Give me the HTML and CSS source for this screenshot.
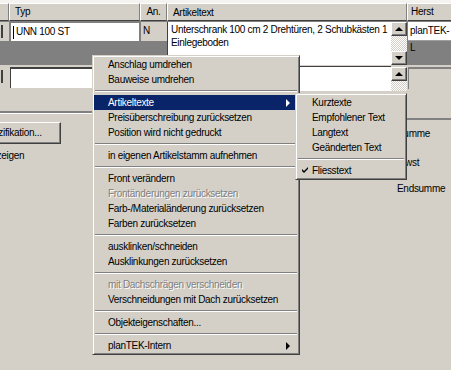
FILE: index.html
```html
<!DOCTYPE html>
<html>
    <head>
        <meta http-equiv="Content-Type" content="text/html; charset=utf-8" />
        <title>Positionen</title>
        <link rel="stylesheet" href="styles.css">
    </head>
    <body>
        <div class="strip"></div>
        <div class="grid-head">
            <div class="hcell c0"></div>
            <div class="hcell c-typ">Typ</div>
            <div class="hcell c-an">An.</div>
            <div class="hcell c-text">Artikeltext</div>
            <div class="hcell c-herst">Herst</div>
        </div>
        <div class="grid-row first">
            <div class="col c0"><div class="stub"><span></span></div></div>
            <div class="col c-typ"><div class="edit"><span class="caret"></span>UNN 100 ST</div></div>
            <div class="col c-an"><div class="flag">N</div></div>
            <div class="col c-text">
                <div class="memo">Unterschrank 100 cm 2 Drehtüren, 2 Schubkästen 1<br>Einlegeboden</div>
                <div class="vscroll">
                    <div class="sbtn up"></div>
                    <div class="track"></div>
                    <div class="sbtn down"></div>
                </div>
            </div>
            <div class="col c-herst">
                <div class="herst">planTEK-</div>
                <div class="herst dark">L</div>
            </div>
        </div>
        <div class="grid-row second">
            <div class="col c0"><div class="stub"><span></span></div></div>
            <div class="col c-typ"><div class="edit"></div></div>
            <div class="col c-an"></div>
            <div class="col c-text">
                <div class="memo"></div>
                <div class="vscroll">
                    <div class="sbtn up"></div>
                    <div class="track"></div>
                </div>
            </div>
            <div class="col c-herst"><div class="herst sunken"></div></div>
        </div>
        <div class="lower">
            <div class="panel-left">
                <div class="etched"></div>
                <div class="btn">Spezifikation...</div>
                <div class="check-label">anzeigen</div>
            </div>
            <div class="panel-right">
                <div class="sum-label">Summe</div>
                <div class="sum-label">Mwst</div>
                <div class="sum-label">Endsumme</div>
            </div>
        </div>

        <div class="menu main-menu">
            <div class="item">Anschlag umdrehen</div>
            <div class="item">Bauweise umdrehen</div>
            <div class="sep"></div>
            <div class="item active sub">Artikeltexte<i class="arrow"></i></div>
            <div class="item">Preisüberschreibung zurücksetzen</div>
            <div class="item">Position wird nicht gedruckt</div>
            <div class="sep"></div>
            <div class="item">in eigenen Artikelstamm aufnehmen</div>
            <div class="sep"></div>
            <div class="item">Front verändern</div>
            <div class="item disabled">Frontänderungen zurücksetzen</div>
            <div class="item">Farb-/Materialänderung zurücksetzen</div>
            <div class="item">Farben zurücksetzen</div>
            <div class="sep"></div>
            <div class="item">ausklinken/schneiden</div>
            <div class="item">Ausklinkungen zurücksetzen</div>
            <div class="sep"></div>
            <div class="item disabled">mit Dachschrägen verschneiden</div>
            <div class="item">Verschneidungen mit Dach zurücksetzen</div>
            <div class="sep"></div>
            <div class="item">Objekteigenschaften...</div>
            <div class="sep"></div>
            <div class="item sub">planTEK-Intern<i class="arrow"></i></div>
        </div>

        <div class="menu sub-menu">
            <div class="item">Kurztexte</div>
            <div class="item">Empfohlener Text</div>
            <div class="item">Langtext</div>
            <div class="item">Geänderten Text</div>
            <div class="sep"></div>
            <div class="item checked">
                <svg class="tick" width="7" height="7" viewBox="0 0 7 7"><path d="M0 2 L2 4 L6 0 L6 2 L2 6 L0 4 Z" fill="#000"/></svg>Fliesstext
            </div>
        </div>
    </body>
</html>
```

FILE: styles.css
```css
body {
    margin:         0;
    width:          451px;
    height:         370px;
    overflow:       hidden;
    position:       relative;
    background:     #d4d0c8;
    font-family:    "Liberation Sans", Arial, sans-serif;
    font-size:      10px;
    letter-spacing: -0.3px;
    color:          #000;
}

/* grid */
.strip {
    height:     3px;
    background: #f4f3f0;
}
.grid-head,
.grid-row {
    display:    flex;
}
.grid-head {
    height:     18px;
}
.c0     { width: 9px; }
.c-typ  { width: 131px; }
.c-an   { width: 27px; }
.c-text { width: 240px; }
.c-herst { flex: 1; }

.hcell {
    box-sizing:     border-box;
    height:         18px;
    line-height:    15px;
    padding-left:   5px;
    border-top:     1px solid #fff;
    border-left:    1px solid #fff;
    border-right:   1px solid #808080;
    border-bottom:  1px solid #404040;
}
.hcell.c0       { padding: 0; border-left: none; }
.hcell.c-an     { padding: 0; text-align: center; }
.hcell.c-herst  { padding-left: 3px; border-right: none; }

.grid-row.first {
    height:     44px;
    background: #808080;
}
.grid-row.second {
    height:     26px;
}
.col {
    display:        flex;
    flex-direction: column;
    box-sizing:     border-box;
}
.stub {
    height:     19px;
    margin-top: 1px;
    background: #d4d0c8;
    position:   relative;
}
.stub span {
    display:    block;
    width:      2px;
    height:     13px;
    margin:     3px 0 0 1px;
    background: #404040;
}
.second .stub {
    margin-top: 2px;
    height:     21px;
}

.edit {
    height:         19px;
    margin:         1px 1px 0 1px;
    box-sizing:     border-box;
    background:     #fff;
    border-top:     1px solid #808080;
    border-left:    1px solid #808080;
    padding-left:   4px;
    line-height:    18px;
    display:        flex;
    align-items:    center;
}
.caret {
    width:          1px;
    height:         13px;
    background:     #000;
    margin:         0 2px 0 -2px;
}
.second .edit {
    height:         21px;
    margin-top:     2px;
    border-top:     2px solid #404040;
    border-left:    1px solid #404040;
}

.flag {
    height:         19px;
    margin-top:     1px;
    background:     #d4d0c8;
    border-left:    1px solid #808080;
    padding-left:   2px;
    line-height:    18px;
}

.c-text {
    flex-direction: row;
    padding-top:    1px;
}
.memo {
    flex:           1;
    background:     #fff;
    border-left:    1px solid #404040;
    padding:        2px 0 0 3px;
    line-height:    12.5px;
}
.second .memo {
    border-top:     1px solid #404040;
}
.vscroll {
    width:          16px;
    display:        flex;
    flex-direction: column;
    background:     #d4d0c8;
}
.track {
    flex:               1;
    background-image:   repeating-conic-gradient(#fff 0 25%, #d4d0c8 0 50%);
    background-size:    2px 2px;
}
.sbtn {
    height:         14px;
    box-sizing:     border-box;
    border-top:     1px solid #fff;
    border-left:    1px solid #fff;
    border-right:   1px solid #404040;
    border-bottom:  1px solid #404040;
    box-shadow:     inset -1px -1px 0 #808080;
    display:        flex;
    align-items:    center;
    justify-content: center;
    background:     #d4d0c8;
}
.sbtn::after {
    content:        "";
    border-left:    4px solid transparent;
    border-right:   4px solid transparent;
}
.sbtn.up::after   { border-bottom: 4px solid #000; }
.sbtn.down::after { border-top: 4px solid #000; }
.second .vscroll  { margin-top: 1px; }

.c-herst {
    padding-left:   1px;
}
.herst {
    height:         18px;
    margin-top:     1px;
    background:     #fff;
    padding-left:   2px;
    line-height:    17px;
    white-space:    nowrap;
    overflow:       hidden;
}
.herst.dark {
    flex:           1;
    margin-top:     0;
    background:     #808080;
    border-top:     1px solid #a0a0a0;
    line-height:    13px;
}
.herst.sunken {
    height:         22px;
    margin-top:     2px;
    background:     #d4d0c8;
    border-top:     2px solid #808080;
    border-left:    1px solid #808080;
    box-sizing:     border-box;
}

/* lower part */
.lower {
    display:    flex;
    flex:       1;
}
.panel-left {
    width:          300px;
    overflow:       hidden;
}
.etched {
    margin-top:     20px;
    height:         0;
    border-top:     2px solid #808080;
    border-bottom:  1px solid #fff;
}
.btn {
    margin:         8px 0 0 -38px;
    width:          99px;
    height:         22px;
    box-sizing:     border-box;
    border-top:     1px solid #fff;
    border-left:    1px solid #fff;
    border-right:   1px solid #404040;
    border-bottom:  1px solid #404040;
    box-shadow:     inset -1px -1px 0 #808080;
    text-align:     center;
    line-height:    20px;
}
.check-label {
    margin:         6px 0 0 -14px;
    line-height:    12px;
}
.panel-right {
    flex:           1;
    margin-top:     27px;
    border-top:     2px solid #808080;
    padding:        8px 0 0 97px;
}
.sum-label {
    height:         29px;
    line-height:    12px;
}
.sum-label:last-child {
    margin-top:     -3px;
}

/* context menus */
.menu {
    position:       absolute;
    box-sizing:     border-box;
    background:     #d4d0c8;
    border-top:     1px solid #d4d0c8;
    border-left:    1px solid #d4d0c8;
    border-right:   1px solid #404040;
    border-bottom:  1px solid #404040;
    padding:        1px;
    box-shadow:     inset 1px 1px 0 #fff, inset -1px -1px 0 #808080;
}
.main-menu {
    left:   92px;
    top:    55px;
    width:  208px;
}
.sub-menu {
    left:   295px;
    top:    93px;
    width:  112px;
}
.item {
    height:         15px;
    line-height:    15px;
    padding-left:   14px;
    display:        flex;
    align-items:    center;
    white-space:    nowrap;
}
.sub-menu .item {
    padding-left:   15px;
}
.item.active {
    background:     #0a246a;
    color:          #fff;
}
.item.disabled {
    color:          #808080;
    text-shadow:    1px 1px 0 #fff;
}
.arrow {
    margin-left:    auto;
    margin-right:   8px;
    border-left:    4px solid #000;
    border-top:     4px solid transparent;
    border-bottom:  4px solid transparent;
}
.active .arrow {
    border-left-color: #fff;
}
.item.checked {
    padding-left:   5px;
}
.tick {
    margin-right:   3px;
}
.sep {
    height:         8px;
    position:       relative;
}
.sep::after {
    content:        "";
    position:       absolute;
    left:           1px;
    right:          1px;
    top:            3px;
    border-top:     1px solid #808080;
    border-bottom:  1px solid #fff;
}
```
